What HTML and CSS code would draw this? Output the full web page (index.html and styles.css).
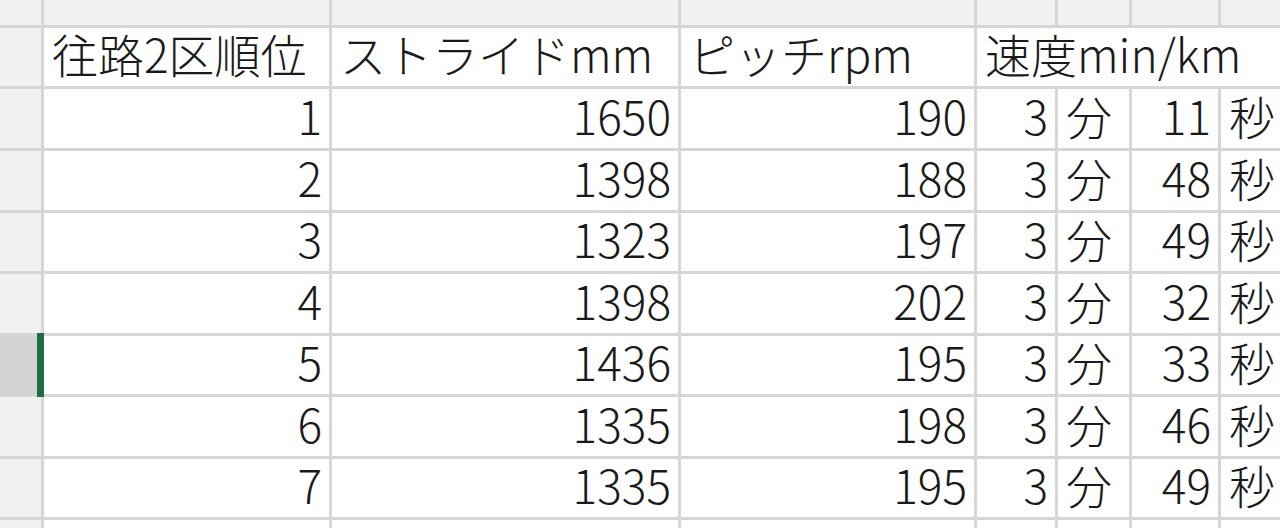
FILE: index.html
```html
<!DOCTYPE html>
<html lang="ja">
<head>
<meta charset="utf-8">
<title>往路2区</title>
<link rel="stylesheet" href="styles.css">
</head>
<body>
<div class="sheet">
  <div class="corner"></div>
  <div class="colhead"></div><div class="colhead"></div><div class="colhead"></div><div class="colhead"></div><div class="colhead"></div><div class="colhead"></div><div class="colhead"></div>

  <div class="rowhead"></div>
  <div class="cell txt">往路2区順位</div>
  <div class="cell txt">ストライドmm</div>
  <div class="cell txt">ピッチrpm</div>
  <div class="cell txt span4">速度min/km</div>

  <div class="rowhead"></div>
  <div class="cell num">1</div><div class="cell num">1650</div><div class="cell num">190</div><div class="cell num">3</div><div class="cell txt">分</div><div class="cell num">11</div><div class="cell txt">秒</div>

  <div class="rowhead"></div>
  <div class="cell num">2</div><div class="cell num">1398</div><div class="cell num">188</div><div class="cell num">3</div><div class="cell txt">分</div><div class="cell num">48</div><div class="cell txt">秒</div>

  <div class="rowhead"></div>
  <div class="cell num">3</div><div class="cell num">1323</div><div class="cell num">197</div><div class="cell num">3</div><div class="cell txt">分</div><div class="cell num">49</div><div class="cell txt">秒</div>

  <div class="rowhead"></div>
  <div class="cell num">4</div><div class="cell num">1398</div><div class="cell num">202</div><div class="cell num">3</div><div class="cell txt">分</div><div class="cell num">32</div><div class="cell txt">秒</div>

  <div class="rowhead selected"></div>
  <div class="cell num">5</div><div class="cell num">1436</div><div class="cell num">195</div><div class="cell num">3</div><div class="cell txt">分</div><div class="cell num">33</div><div class="cell txt">秒</div>

  <div class="rowhead"></div>
  <div class="cell num">6</div><div class="cell num">1335</div><div class="cell num">198</div><div class="cell num">3</div><div class="cell txt">分</div><div class="cell num">46</div><div class="cell txt">秒</div>

  <div class="rowhead"></div>
  <div class="cell num">7</div><div class="cell num">1335</div><div class="cell num">195</div><div class="cell num">3</div><div class="cell txt">分</div><div class="cell num">49</div><div class="cell txt">秒</div>

  <div class="rowhead"></div>
  <div class="cell"></div><div class="cell"></div><div class="cell"></div><div class="cell"></div><div class="cell"></div><div class="cell"></div><div class="cell"></div>
</div>
</body>
</html>
```

FILE: styles.css
```css
html, body {
  margin: 0;
  padding: 0;
  background: #ffffff;
  overflow: hidden;
}

.sheet {
  width: 1280px;
  height: 528px;
  overflow: hidden;
  display: grid;
  grid-template-columns: 41px 285px 346px 293px 78px 71px 86px 59px;
  grid-template-rows: 25px 58px 59px 59px 58px 59px 58px 59px 58px 40px;
  gap: 3px;
  background: #d6d6d6;
  font-family: "Noto Sans CJK JP", "Noto Sans", sans-serif;
  font-size: 46px;
  font-weight: 300;
  color: #1a1a1a;
}

.corner,
.colhead {
  background: #f1f1f1;
}

.rowhead {
  background: #f1f1f1;
  position: relative;
}

.rowhead.selected {
  background: #d3d3d3;
}

.rowhead.selected::after {
  content: "";
  position: absolute;
  top: -3px;
  bottom: -3px;
  right: -3px;
  width: 7px;
  background: #1f6e43;
}

.cell {
  background: #ffffff;
  display: flex;
  align-items: center;
  line-height: 1.1;
  white-space: nowrap;
  padding-bottom: 7px;
  box-sizing: border-box;
}

.num {
  justify-content: flex-end;
  padding-right: 7px;
}

.txt {
  justify-content: flex-start;
  padding-left: 8px;
}

.span4 {
  grid-column: span 4;
}
```
